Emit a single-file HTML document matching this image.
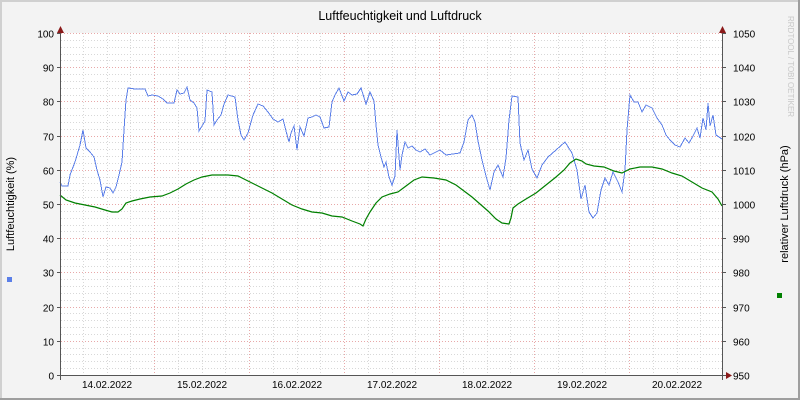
<!DOCTYPE html>
<html><head><meta charset="utf-8"><style>
html,body{margin:0;padding:0;background:#f3f3f3}
svg{display:block}
text{font-family:"Liberation Sans",sans-serif;font-size:10px;fill:#000}
</style></head><body>
<svg width="800" height="400" viewBox="0 0 800 400">
<rect x="0" y="0" width="800" height="400" fill="#f3f3f3"/>
<rect x="0" y="0" width="800" height="2" fill="#d0d0d0"/>
<rect x="0" y="0" width="2" height="400" fill="#d0d0d0"/>
<rect x="798" y="0" width="2" height="400" fill="#9e9e9e"/>
<rect x="0" y="398" width="800" height="2" fill="#9e9e9e"/>
<rect x="61" y="33" width="661" height="342" fill="#fff"/>
<g id="grid" stroke-width="1" shape-rendering="crispEdges"></g>
<text x="400" y="20" text-anchor="middle" style="font-size:12.5px">Luftfeuchtigkeit und Luftdruck</text>
<text transform="translate(14,204) rotate(-90)" text-anchor="middle" style="font-size:11px">Luftfeuchtigkeit (%)</text>
<text transform="translate(788,204) rotate(-90)" text-anchor="middle" style="font-size:11px">relativer Luftdruck (hPa)</text>
<text transform="translate(788,16) rotate(90)" style="font-size:8px;fill:#c8c8c8">RRDTOOL / TOBI OETIKER</text>
<rect x="7" y="277" width="5" height="5" fill="#5b7fe8"/>
<rect x="777" y="293" width="5" height="5" fill="#008000"/>
<g id="labels"></g>
<polyline fill="none" stroke="#5b7fe8" stroke-width="1" shape-rendering="crispEdges" points="60,182 62,186 68,186 70,175 75,162 80,145 83,130 86,148 90,152 94,157 97,170 100,180 103,197 106,187 110,188 113,193 116,187 119,175 122,162 124,130 126,100 128,88 135,89 145,89 148,96 152,95 158,96 163,99 167,103 174,103 177,90 180,94 184,93 187,87 190,100 194,103 197,108 199,131 202,126 205,121 207,90 212,92 214,125 217,120 221,115 224,104 228,95 235,97 238,120 241,135 244,140 248,133 253,115 258,104 263,106 268,112 273,119 278,122 283,119 286,131 289,142 291,133 294,126 297,150 300,127 304,136 308,118 312,117 316,115 320,117 324,128 329,127 332,102 335,95 339,88 344,101 348,92 352,95 357,94 361,88 366,104 370,92 374,101 376,125 378,145 381,157 384,167 386,162 389,177 392,185 395,176 397,130 400,170 402,155 405,142 408,148 412,146 416,150 420,152 425,149 430,155 440,150 446,155 460,153 464,142 468,120 472,115 475,122 478,141 482,160 486,176 490,190 494,172 498,165 503,177 506,158 509,120 512,96 518,97 520,143 524,160 528,150 532,169 537,178 542,165 548,157 556,150 565,142 572,153 577,170 581,199 585,185 589,212 593,218 597,213 601,190 605,178 609,185 613,172 618,182 622,192 625,170 627,130 630,95 634,102 638,102 642,112 646,105 652,108 657,118 662,125 666,135 670,140 675,145 680,147 685,138 689,143 693,136 697,128 700,138 703,118 706,130 708,103 710,126 713,115 716,135 722,139"/>
<polyline fill="none" stroke="#008000" stroke-width="1.2" points="60,195 66,200 75,203 85,205 95,207 105,210 112,212 118,212 122,209 126,203 132,201 140,199 150,197 162,196 170,193 178,189 186,184 194,180 202,177 212,175 228,175 238,176 246,180 254,184 262,188 272,193 282,199 292,205 302,209 312,212 322,213 332,216 342,217 352,221 360,224 363,226 366,219 370,212 376,203 382,197 390,194 398,192 406,186 414,180 422,177 434,178 446,180 456,185 464,191 472,197 480,204 488,211 496,219 502,223 509,224 511,218 513,208 518,204 526,199 536,193 546,185 556,177 564,170 570,163 576,159 582,161 586,164 594,166 604,167 614,171 622,173 630,169 640,167 652,167 662,169 672,173 682,176 692,182 702,188 712,192 718,199 722,206"/>
<line x1="60.5" y1="30" x2="60.5" y2="380" stroke="#555"/>
<line x1="57" y1="375.5" x2="726" y2="375.5" stroke="#555"/>
<line x1="722.5" y1="30" x2="722.5" y2="380" stroke="#555"/>
<polygon points="57,33 64,33 60.5,26" fill="#8b1a1a"/>
<polygon points="719,33 726,33 722.5,26" fill="#8b1a1a"/>
<polygon points="726,372 726,379 732,375.5" fill="#8b1a1a"/>
</svg>
<script>
var ns="http://www.w3.org/2000/svg",g=document.getElementById("grid"),L=document.getElementById("labels");
function ln(x1,y1,x2,y2,c,d){var e=document.createElementNS(ns,"line");e.setAttribute("x1",x1);e.setAttribute("y1",y1);e.setAttribute("x2",x2);e.setAttribute("y2",y2);e.setAttribute("stroke",c);if(d)e.setAttribute("stroke-dasharray",d);g.appendChild(e);}
function tx(x,y,s,a){var e=document.createElementNS(ns,"text");e.setAttribute("x",x);e.setAttribute("y",y);e.setAttribute("text-anchor",a);e.textContent=s;L.appendChild(e);}
for(var v=0;v<=100;v+=2){var y=Math.round(375-v*3.42)+0.5;if(v%10)ln(61,y,722,y,"#d8d8d8","1,2");}
for(var x=59;x<722;x+=23.75){var xx=Math.round(x)+0.5;if(xx>61)ln(xx,33,xx,375,"#d8d8d8","1,2");}
for(var x=154;x<722;x+=95){ln(x+0.5,33,x+0.5,375,"#e8a8a8","1,2");}
for(var v=0;v<=100;v+=10){var y=Math.round(375-v*3.42)+0.5;if(v)ln(61,y,722,y,"#e8a8a8","1,2");ln(57,y,61,y,"#555");ln(722,y,726,y,"#555");tx(54,y+4,v,"end");tx(733,y+4,950+v,"start");}
var d=["14.02.2022","15.02.2022","16.02.2022","17.02.2022","18.02.2022","19.02.2022","20.02.2022"];
for(var i=0;i<7;i++)tx(107+95*i,388,d[i],"middle");
</script>
</body></html>
